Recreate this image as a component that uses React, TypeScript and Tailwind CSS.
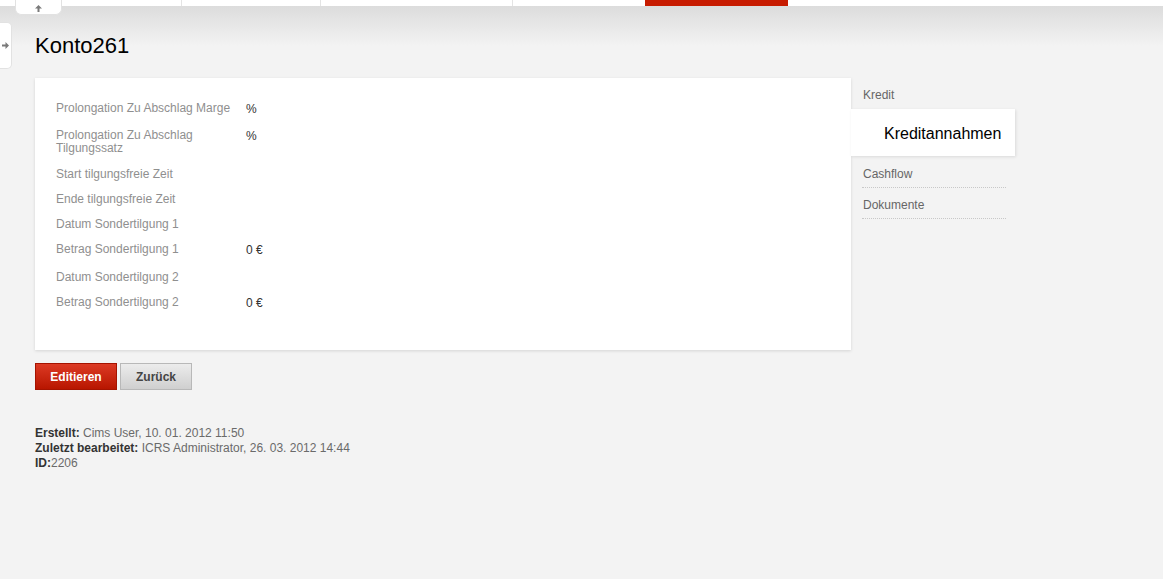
import type { FC } from "react"

const rows = [
    { label: "Prolongation Zu Abschlag Marge", value: "%", h: "h-[27px]" },
    { label: "Prolongation Zu Abschlag Tilgungssatz", value: "%", h: "h-[39px]" },
    { label: "Start tilgungsfreie Zeit", value: "", h: "h-[25px]" },
    { label: "Ende tilgungsfreie Zeit", value: "", h: "h-[25px]" },
    { label: "Datum Sondertilgung 1", value: "", h: "h-[25px]" },
    { label: "Betrag Sondertilgung 1", value: "0 €", h: "h-[28px]" },
    { label: "Datum Sondertilgung 2", value: "", h: "h-[25px]" },
    { label: "Betrag Sondertilgung 2", value: "0 €", h: "h-[28px]" },
]

const UpArrow = () => (
    <svg width="7" height="7" viewBox="0 0 7 7">
        <path d="M3.5 0 L7 3.5 L4.5 3.5 L4.5 7 L2.5 7 L2.5 3.5 L0 3.5 Z" fill="#7a7a7a" />
    </svg>
)

const RightArrow = () => (
    <svg width="7" height="7" viewBox="0 0 7 7">
        <path d="M7 3.5 L3.5 0 L3.5 2.5 L0 2.5 L0 4.5 L3.5 4.5 L3.5 7 Z" fill="#7a7a7a" />
    </svg>
)

const TopBar: FC = () => (
    <div className="flex h-[6px] bg-white">
        <div className="w-[182px] border-r border-[#e4e4e4]" />
        <div className="w-[139px] border-r border-[#e4e4e4]" />
        <div className="w-[192px] border-r border-[#e4e4e4]" />
        <div className="w-[132px]" />
        <div className="w-[143px] bg-[#c71b00]" />
        <div className="flex-1" />
    </div>
)

const SideNav: FC = () => (
    <div className="flex flex-col text-[12px] leading-[14px]">
        <div className="ml-[12px] w-[143px] pt-[10px] pb-[7px] text-[#666]">Kredit</div>
        <div className="w-[164px] bg-white pl-[33px] pt-[16px] pb-[13px] text-[16px] leading-[18px] text-black shadow-[1px_1px_3px_rgba(0,0,0,0.1)]">
            Kreditannahmen
        </div>
        <div className="ml-[11px] w-[144px] border-b border-dotted border-[#c8c8c8] pt-[11px] pb-[6px] pl-[1px] text-[#666]">
            Cashflow
        </div>
        <div className="ml-[11px] w-[144px] border-b border-dotted border-[#c8c8c8] pt-[10px] pb-[6px] pl-[1px] text-[#666]">
            Dokumente
        </div>
    </div>
)

export default function App() {
    return (
        <div className="relative h-[579px] w-full overflow-hidden bg-[linear-gradient(180deg,#dcdcdc_6px,#f3f3f3_46px)] font-['Liberation_Sans',Arial,sans-serif]">
            <TopBar />

            {/* collapse tabs */}
            <div className="absolute left-[15px] top-0 flex h-[15px] w-[47px] items-center justify-center rounded-b-[6px] border border-t-0 border-[#e2e2e2] bg-white pt-[2px]">
                <UpArrow />
            </div>
            <div className="absolute left-0 top-[22px] flex h-[47px] w-[12px] items-center justify-center rounded-r-[5px] border border-l-0 border-[#e2e2e2] bg-white pr-[1px]">
                <RightArrow />
            </div>

            <div className="pl-[35px] pt-[27px]">
                <h1 className="h-[26px] text-[22px] leading-[26px] text-black">Konto261</h1>

                <div className="mt-[19px] flex items-start">
                    <div className="w-[816px] bg-white px-[21px] pt-[24px] pb-[26px] shadow-[0_1px_3px_rgba(0,0,0,0.13)]">
                        {rows.map((r) => (
                            <div key={r.label} className={`flex ${r.h} text-[12px] leading-[13px]`}>
                                <div className="w-[190px] text-[#8f8f8f]">{r.label}</div>
                                <div className="mt-[1px] text-[#333]">{r.value}</div>
                            </div>
                        ))}
                    </div>
                    <SideNav />
                </div>

                <div className="mt-[13px] flex gap-[3px]">
                    <button className="h-[27px] w-[82px] border border-[#a51300] bg-[linear-gradient(180deg,#dc3a24,#b81600)] text-[12px] font-bold text-white">
                        Editieren
                    </button>
                    <button className="h-[27px] w-[72px] border border-[#b8b8b8] bg-[linear-gradient(180deg,#ececec,#cfcfcf)] text-[12px] font-bold text-[#444]">
                        Zurück
                    </button>
                </div>

                <div className="mt-[36px] text-[12px] leading-[15px] text-[#6a6a6a]">
                    <div>
                        <span className="font-bold text-[#333]">Erstellt:</span> Cims User, 10. 01. 2012 11:50
                    </div>
                    <div>
                        <span className="font-bold text-[#333]">Zuletzt bearbeitet:</span> ICRS Administrator, 26. 03. 2012 14:44
                    </div>
                    <div>
                        <span className="font-bold text-[#333]">ID:</span>2206
                    </div>
                </div>
            </div>
        </div>
    )
}
